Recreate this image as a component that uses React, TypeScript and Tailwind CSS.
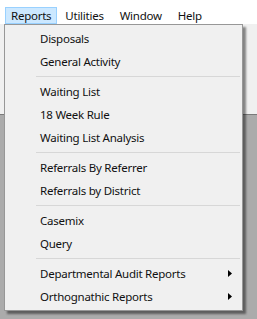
import React from 'react';

type Entry = { label: string; sub?: boolean } | 'sep';

const items: Entry[] = [
  { label: 'Disposals' },
  { label: 'General Activity' },
  'sep',
  { label: 'Waiting List' },
  { label: '18 Week Rule' },
  { label: 'Waiting List Analysis' },
  'sep',
  { label: 'Referrals By Referrer' },
  { label: 'Referrals by District' },
  'sep',
  { label: 'Casemix' },
  { label: 'Query' },
  'sep',
  { label: 'Departmental Audit Reports', sub: true },
  { label: 'Orthognathic Reports', sub: true },
];

const menus = ['Reports', 'Utilities', 'Window', 'Help'];

export default function App() {
  return (
    <div
      className="relative flex h-[319px] w-[257px] flex-col overflow-hidden bg-white text-[11.5px] tracking-[-0.25px] text-[#111]"
      style={{ fontFamily: '"Noto Sans", "Segoe UI", sans-serif' }}
    >
      {/* menu bar */}
      <div className="flex h-[24px] items-end bg-white pl-[5px]">
        {menus.map((m, i) => (
          <div
            key={m}
            className={`flex h-[17px] items-center leading-none ${
              i === 0
                ? 'border border-[#99d1ff] bg-[#cce8ff] px-[5px]'
                : 'border border-transparent px-[7px]'
            }`}
          >
            {m}
          </div>
        ))}
      </div>

      {/* form area */}
      <div className="h-[90px] bg-[#f0f0f0]" />
      {/* mdi client area */}
      <div className="flex-1 border-t border-[#7a7a7a] bg-[#ababab]" />

      {/* dropdown */}
      <div className="absolute left-[4px] top-[24px] w-[239px] border border-[#979797] bg-[#f0f0f0] py-[2px] shadow-[3px_3px_2px_rgba(0,0,0,0.45)]">
        {items.map((it, i) =>
          it === 'sep' ? (
            <div key={i} className="flex h-[7px] items-center pl-[31px] pr-[2px]">
              <div className="h-px w-full bg-[#d7d7d7]" />
            </div>
          ) : (
            <div key={i} className="flex h-[23px] items-center justify-between pl-[35px] pr-[10px]">
              <span>{it.label}</span>
              {it.sub && (
                <svg width="4" height="7" viewBox="0 0 4 7">
                  <path d="M0 0 L4 3.5 L0 7 Z" fill="#000" />
                </svg>
              )}
            </div>
          )
        )}
      </div>
    </div>
  );
}
